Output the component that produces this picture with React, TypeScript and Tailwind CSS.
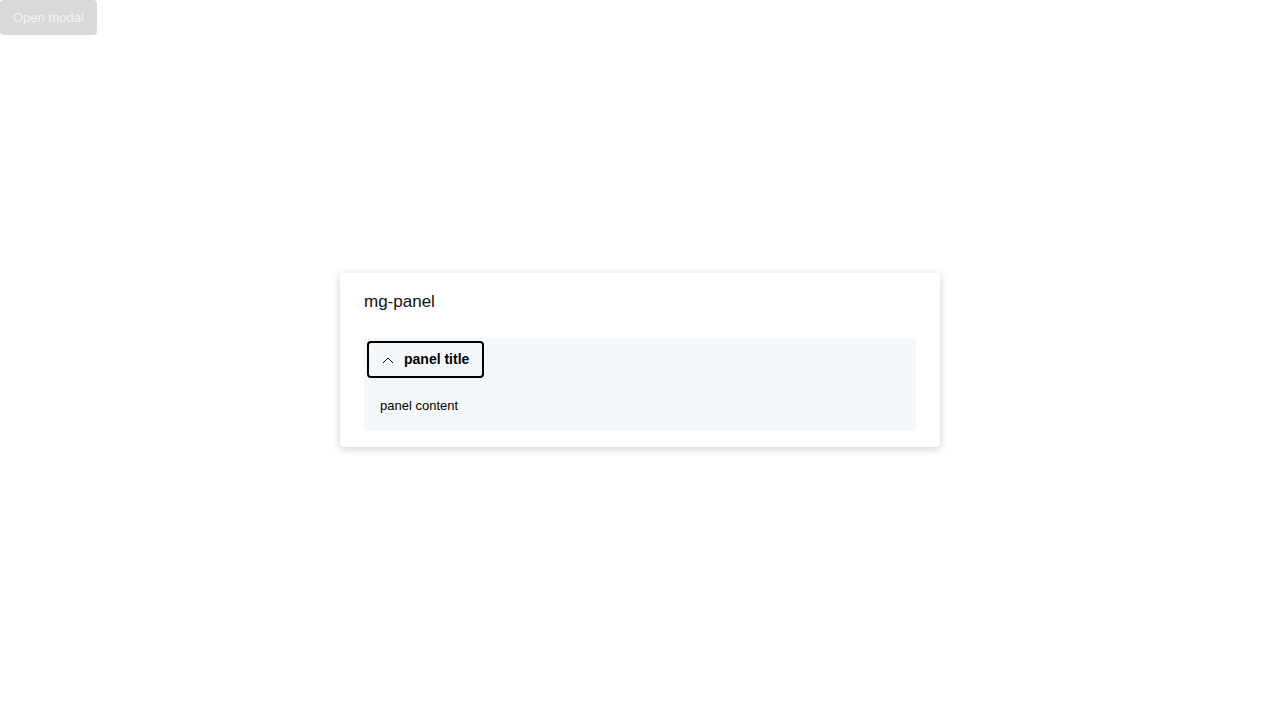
import React from 'react';

export default function App() {
  return (
    <div className="relative h-[720px] w-[1280px] bg-white font-['Liberation_Sans',Arial,sans-serif]">
      <button className="h-[35px] rounded-[4px] bg-[#d8d9da] px-[13px] text-[13px] text-[#f3f4f5]">
        Open modal
      </button>

      {/* modal */}
      <div className="absolute left-[340px] top-[273px] w-[600px] rounded-[4px] bg-white px-6 pb-4 pt-[19px] shadow-[0_2px_8px_rgba(0,0,0,0.18)]">
        <h2 className="text-[17px] leading-5 text-[#111]">mg-panel</h2>

        <div className="mt-[26px] rounded-[3px] bg-[#f4f8fb] pb-[17px] pl-[3px] pt-[3px]">
          <button className="flex h-[37px] items-center gap-[10px] rounded-[4px] border-2 border-black pl-[13px] pr-[13px] text-[14px] font-bold text-black">
            <svg width="12" height="8" viewBox="0 0 12 8" fill="none" stroke="#000" strokeWidth="1">
              <path d="M1 7L6 2L11 7" />
            </svg>
            panel title
          </button>
          <p className="ml-[13px] mt-[20px] text-[13px] leading-4 text-black">panel content</p>
        </div>
      </div>
    </div>
  );
}
